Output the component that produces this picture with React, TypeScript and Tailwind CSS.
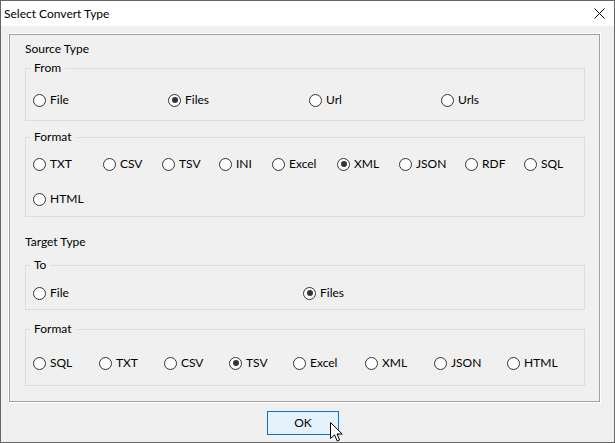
const font = "font-['Segoe_UI',Lato,'Noto_Sans',sans-serif]";

type Item = { label: string; w: string; checked?: boolean };

const fromItems: Item[] = [
  { label: "File", w: "w-[135px]" },
  { label: "Files", w: "w-[141px]", checked: true },
  { label: "Url", w: "w-[132px]" },
  { label: "Urls", w: "w-[60px]" },
];

const srcFormatRow1: Item[] = [
  { label: "TXT", w: "w-[70px]" },
  { label: "CSV", w: "w-[59px]" },
  { label: "TSV", w: "w-[57px]" },
  { label: "INI", w: "w-[53px]" },
  { label: "Excel", w: "w-[65px]" },
  { label: "XML", w: "w-[62px]", checked: true },
  { label: "JSON", w: "w-[66px]" },
  { label: "RDF", w: "w-[59px]" },
  { label: "SQL", w: "w-[50px]" },
];

const srcFormatRow2: Item[] = [{ label: "HTML", w: "w-[70px]" }];

const toItems: Item[] = [
  { label: "File", w: "w-[270px]" },
  { label: "Files", w: "w-[60px]", checked: true },
];

const targetFormat: Item[] = [
  { label: "SQL", w: "w-[66px]" },
  { label: "TXT", w: "w-[65px]" },
  { label: "CSV", w: "w-[65px]" },
  { label: "TSV", w: "w-[64px]", checked: true },
  { label: "Excel", w: "w-[72px]" },
  { label: "XML", w: "w-[69px]" },
  { label: "JSON", w: "w-[73px]" },
  { label: "HTML", w: "w-[60px]" },
];

function Radio({ item }: { item: Item }) {
  return (
    <div className={`flex h-4 shrink-0 items-center gap-[4px] ${item.w}`}>
      <span className="flex size-[13px] shrink-0 items-center justify-center rounded-full border border-[#333] bg-white">
        {item.checked && <span className="size-[6px] rounded-full bg-[#333]" />}
      </span>
      <span className="leading-4">{item.label}</span>
    </div>
  );
}

function Row({ items }: { items: Item[] }) {
  return (
    <div className="flex">
      {items.map((it) => (
        <Radio key={it.label} item={it} />
      ))}
    </div>
  );
}

function Group({
  title,
  className,
  children,
}: {
  title: string;
  className: string;
  children: React.ReactNode;
}) {
  return (
    <fieldset className={`border border-[#dcdcdc] pl-[7px] ${className}`}>
      <legend className="-ml-[3px] px-[4px] leading-4">{title}</legend>
      {children}
    </fieldset>
  );
}

export default function App() {
  return (
    <div
      className={`relative flex h-[443px] w-[615px] flex-col border border-[#666] bg-[#f0f0f0] text-[12px] text-black ${font}`}
    >
      <div className="flex h-[25px] shrink-0 items-center justify-between bg-white pl-[3px] pr-[9px]">
        <span className="leading-4">Select Convert Type</span>
        <svg width="11" height="11" viewBox="0 0 11 11" className="mb-[1px]">
          <path d="M0.5 0.5 L10.5 10.5 M10.5 0.5 L0.5 10.5" stroke="#000" strokeWidth="1" />
        </svg>
      </div>

      <div className="ml-[8px] mt-[8px] flex h-[368px] w-[591px] flex-col border border-[#a0a0a0] pl-[15px] pr-[14px] pt-[6px] shadow-[0_0_0_1px_#fff]">
        <div className="leading-4">Source Type</div>

        <Group title="From" className="mt-[3px] pb-[12px]">
          <div className="pt-[16px]">
            <Row items={fromItems} />
          </div>
        </Group>

        <Group title="Format" className="mt-[8px] pb-[9px]">
          <div className="flex flex-col gap-[19px] pt-[11px]">
            <Row items={srcFormatRow1} />
            <Row items={srcFormatRow2} />
          </div>
        </Group>

        <div className="mt-[17px] leading-4">Target Type</div>

        <Group title="To" className="mt-[7px] pb-[8px]">
          <div className="pt-[12px]">
            <Row items={toItems} />
          </div>
        </Group>

        <Group title="Format" className="mt-[11px] pb-[14px]">
          <div className="pt-[18px]">
            <Row items={targetFormat} />
          </div>
        </Group>
      </div>

      <div className="mt-[9px] flex pl-[266px]">
        <button
          type="button"
          className="flex h-[24px] w-[72px] items-center justify-center border border-[#0078d7] bg-[#e5f1fb] leading-4"
        >
          OK
        </button>
      </div>

      <svg
        width="14"
        height="21"
        viewBox="0 0 14 21"
        className="absolute left-[329px] top-[421px]"
      >
        <path
          d="M0.5 0.5 L0.5 16.5 L4.5 12.8 L7.2 19 L9.6 18 L7 12 L12.2 12 Z"
          fill="#fff"
          stroke="#000"
          strokeWidth="1"
          strokeLinejoin="miter"
        />
      </svg>
    </div>
  );
}
